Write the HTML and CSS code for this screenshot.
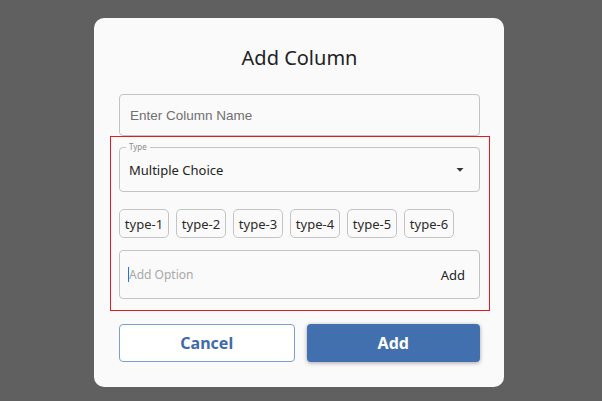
FILE: index.html
```html
<!DOCTYPE html>
<html>
<head>
<meta charset="utf-8">
<link rel="stylesheet" href="styles.css">
</head>
<body>
<div class="dialog">
  <h1 class="title">Add Column</h1>
  <div class="name-field">Enter Column Name</div>
  <div class="group">
    <div class="select">
      <span class="select-label">Type</span>
      <span class="select-value">Multiple Choice</span>
      <svg class="arrow" width="8" height="4" viewBox="0 0 8 4"><path d="M0.5 0 L7.5 0 L4 3.8 Z" fill="#333"/></svg>
    </div>
    <div class="chips">
      <span class="chip">type-1</span>
      <span class="chip">type-2</span>
      <span class="chip">type-3</span>
      <span class="chip">type-4</span>
      <span class="chip">type-5</span>
      <span class="chip">type-6</span>
    </div>
    <div class="option-field">
      <span class="caret"></span>
      <span class="placeholder">Add Option</span>
      <span class="option-add">Add</span>
    </div>
  </div>
  <div class="actions">
    <button class="btn btn-cancel">Cancel</button>
    <button class="btn btn-add">Add</button>
  </div>
</div>
</body>
</html>
```
FILE: styles.css
```css
html, body {
  margin: 0;
  padding: 0;
  background: #606060;
  height: 100%;
}
body {
  font-family: "Noto Sans", "Open Sans", sans-serif;
  padding-top: 18px;
  padding-left: 94px;
  box-sizing: border-box;
}
.dialog {
  width: 410px;
  box-sizing: border-box;
  background: #fafafa;
  border-radius: 10px;
  padding: 26px 24px 25px 25px;
}
.title {
  margin: 0;
  font-weight: 400;
  font-size: 20px;
  line-height: 28px;
  height: 28px;
  text-align: center;
  color: #222;
  margin-bottom: 22px;
}
.name-field {
  height: 42px;
  box-sizing: border-box;
  border: 1px solid #c4c4c4;
  border-radius: 4px;
  padding: 0 10px;
  display: flex;
  align-items: center;
  font-family: "Liberation Sans", Arial, sans-serif;
  font-size: 13.5px;
  color: #707070;
}
.group {
  margin: 0 -10px 0 -9px;
  border: 1px solid #e21b23;
  padding: 10px 9px 11px 8px;
  display: flex;
  flex-direction: column;
}
.select {
  height: 45px;
  box-sizing: border-box;
  border: 1px solid #c4c4c4;
  border-radius: 4px;
  padding: 0 15px 0 9px;
  display: flex;
  align-items: center;
  position: relative;
}
.select-label {
  position: absolute;
  left: 6px;
  top: -6px;
  font-size: 8px;
  line-height: 10px;
  color: #8a8a8a;
  padding: 0 3px;
  background: #fafafa;
}
.select-value {
  font-size: 13px;
  color: #222;
  flex: 1;
}
.chips {
  display: flex;
  gap: 7px;
  margin-top: 17px;
}
.chip {
  width: 50px;
  height: 29px;
  box-sizing: border-box;
  border: 1px solid #c4c4c4;
  border-radius: 5px;
  display: flex;
  align-items: center;
  justify-content: center;
  font-size: 13px;
  color: #2a2a2a;
}
.option-field {
  margin-top: 12px;
  height: 49px;
  box-sizing: border-box;
  border: 1px solid #c4c4c4;
  border-radius: 4px;
  padding: 0 14px 0 8px;
  display: flex;
  align-items: center;
  font-size: 12px;
}
.caret {
  width: 1px;
  height: 15px;
  background: #1a73e8;
}
.placeholder {
  color: #a8a8a8;
  flex: 1;
}
.option-add {
  color: #222;
  font-size: 13px;
}
.actions {
  display: flex;
  gap: 12px;
  margin-top: 13px;
}
.btn {
  flex: 1;
  height: 38px;
  border-radius: 4px;
  font-family: "Noto Sans", "Open Sans", sans-serif;
  font-weight: 700;
  font-size: 16px;
  cursor: pointer;
}
.btn-cancel {
  background: #fff;
  border: 1px solid #7f9fcb;
  color: #3f6ba7;
}
.btn-add {
  background: #4270ae;
  border: none;
  color: #fff;
  box-shadow: 0 1px 4px rgba(0,0,0,0.35);
}
```
